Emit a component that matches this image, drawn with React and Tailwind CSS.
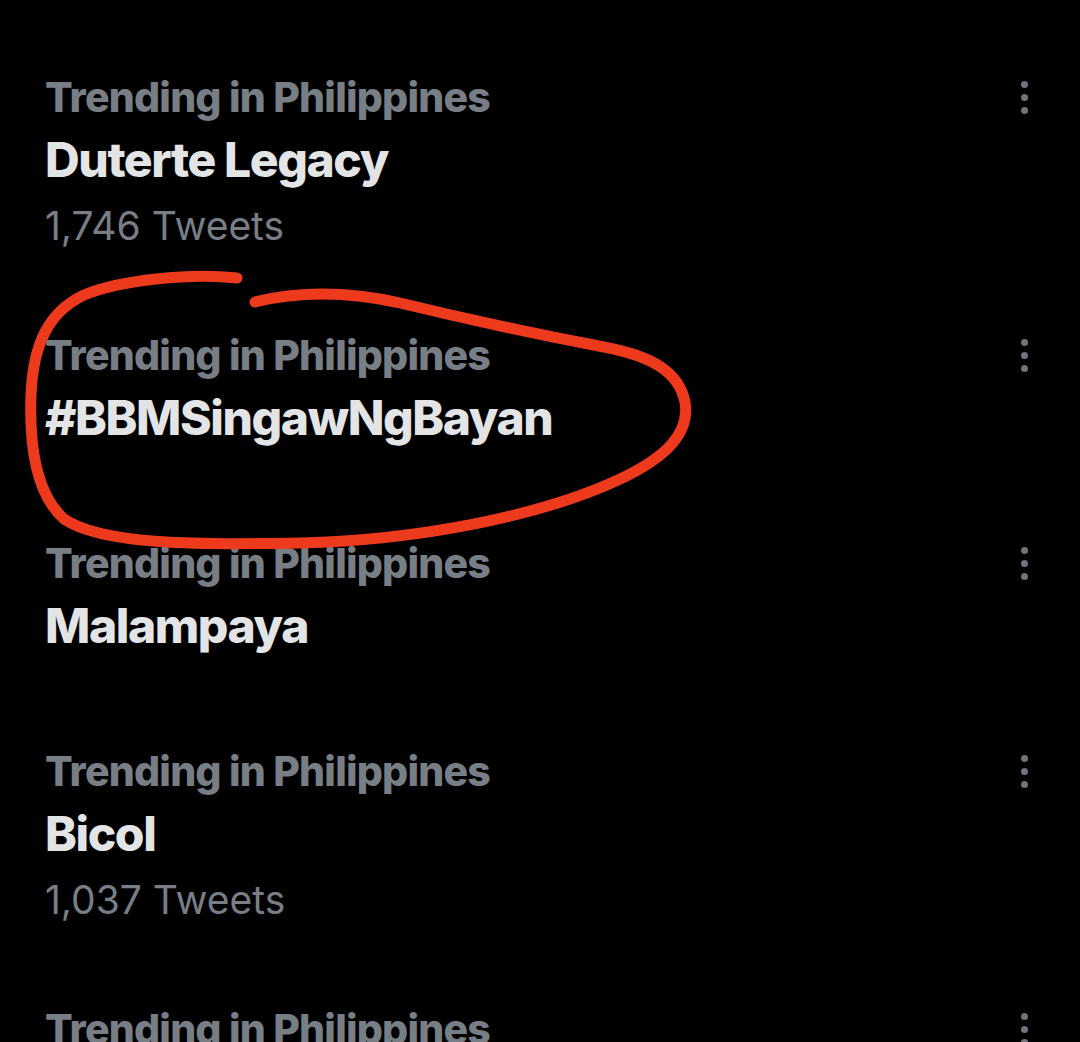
const trends = [
  { label: 'Trending in Philippines', title: 'Duterte Legacy', count: '1,746 Tweets' },
  { label: 'Trending in Philippines', title: '#BBMSingawNgBayan' },
  { label: 'Trending in Philippines', title: 'Malampaya' },
  { label: 'Trending in Philippines', title: 'Bicol', count: '1,037 Tweets' },
  { label: 'Trending in Philippines', title: 'Lorem' },
];

function MoreDots() {
  return (
    <button className="flex flex-col items-center gap-[6px] p-0">
      <span className="block h-[7px] w-[7px] rounded-full bg-[#6f757a]" />
      <span className="block h-[7px] w-[7px] rounded-full bg-[#6f757a]" />
      <span className="block h-[7px] w-[7px] rounded-full bg-[#6f757a]" />
    </button>
  );
}

function TrendRow({ trend }) {
  return (
    <div
      className={`flex flex-col pl-[45px] pr-[52px] pt-[72px] ${trend.count ? 'pb-[7px]' : 'pb-[20px]'}`}
    >
      {/* Context line */}
      <div className="flex h-[50px] items-center justify-between">
        <span className="text-[41px] font-extrabold leading-[50px] tracking-[-0.8px] text-[#787e85]">
          {trend.label}
        </span>
        <MoreDots />
      </div>

      {/* Trend name */}
      <div className="mt-[10px] h-[56px] text-[48px] font-extrabold leading-[56px] tracking-[-1.4px] text-[#e2e4e5] whitespace-nowrap">
        {trend.title}
      </div>

      {/* Tweet count */}
      {trend.count && (
        <div className="mt-[13px] h-[50px] text-[39px] font-normal leading-[50px] text-[#787e85]">
          {trend.count}
        </div>
      )}
    </div>
  );
}

export default function App() {
  return (
    <div
      className="relative h-[1042px] w-[1080px] overflow-hidden bg-black"
      style={{ fontFamily: 'Inter, "Noto Sans", "Liberation Sans", sans-serif' }}
    >
      {trends.map((trend, i) => (
        <TrendRow key={i} trend={trend} />
      ))}

      {/* Hand-drawn marker circle */}
      <svg
        className="pointer-events-none absolute left-0 top-0"
        width="1080"
        height="1042"
        viewBox="0 0 1080 1042"
        fill="none"
      >
        <path
          d="M237,278 C190,273 120,280 84,295 C48,312 33,345 31,395 C29,450 37,495 64,519 C102,545 200,545 300,543 C420,540 540,516 618,480 C668,457 690,432 685,402 C679,372 652,356 604,347 C525,332 462,318 400,303 C350,292 300,291 255,302"
          stroke="#ee3a1c"
          strokeWidth="11"
          strokeLinecap="round"
          strokeLinejoin="round"
        />
      </svg>
    </div>
  );
}
